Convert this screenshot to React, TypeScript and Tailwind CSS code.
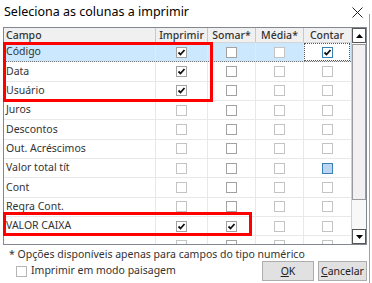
import React from "react";

type Row = {
  name: string;
  imprimir: boolean;
  somar: boolean;
  contar: boolean;
  contarBlue?: boolean;
};

const rows: Row[] = [
  { name: "Código", imprimir: true, somar: false, contar: true },
  { name: "Data", imprimir: true, somar: false, contar: false },
  { name: "Usuário", imprimir: true, somar: false, contar: false },
  { name: "Juros", imprimir: false, somar: false, contar: false },
  { name: "Descontos", imprimir: false, somar: false, contar: false },
  { name: "Out. Acréscimos", imprimir: false, somar: false, contar: false },
  { name: "Valor total tít", imprimir: false, somar: false, contar: false, contarBlue: true },
  { name: "Cont", imprimir: false, somar: false, contar: false },
  { name: "Regra Cont.", imprimir: false, somar: false, contar: false },
  { name: "VALOR CAIXA", imprimir: true, somar: true, contar: false },
  { name: "", imprimir: false, somar: false, contar: false },
];

function Check({
  checked,
  tone = "dark",
  fill = false,
  focus = false,
}: {
  checked: boolean;
  tone?: "dark" | "light";
  fill?: boolean;
  focus?: boolean;
}) {
  const border = fill || focus ? "border-[#3c7fb1]" : tone === "dark" ? "border-[#a2a2a2]" : "border-[#c4c4c4]";
  const bg = fill ? "bg-[#bcd6f2]" : "bg-white";
  return (
    <div className={`w-[11px] h-[11px] border ${border} ${bg} flex items-center justify-center`}>
      {checked && (
        <svg width="9" height="9" viewBox="0 0 9 9">
          <path d="M1.5 4.5 L3.5 6.5 L7.5 2" stroke="#111" strokeWidth="1.8" fill="none" />
        </svg>
      )}
    </div>
  );
}

export default function App() {
  return (
    <div
      className="relative w-[372px] h-[283px] bg-white overflow-hidden text-[#222]"
      style={{ fontFamily: '"Noto Sans", "Open Sans", sans-serif' }}
    >
      {/* title bar */}
      <div className="h-[25px] flex items-center justify-between pl-[4px] pr-[8px]">
        <span className="text-[12.5px] text-black">Seleciona as colunas a imprimir</span>
        <svg width="11" height="11" viewBox="0 0 11 11" className="mr-[1px]">
          <path d="M0.5 0.5 L10.5 10.5 M10.5 0.5 L0.5 10.5" stroke="#222" strokeWidth="1" />
        </svg>
      </div>

      {/* table */}
      <div className="ml-[3px] mt-[2px] w-[364px] h-[218px] border border-[#828790] flex overflow-hidden">
        <div className="flex-1 flex flex-col overflow-hidden text-[10.5px]">
          <div className="grid grid-cols-[152px_52px_48px_48px_46px] h-[15px] bg-[#f0f0f0] border-b border-[#d5d5d5] text-[#333] font-medium shrink-0">
            <div className="pl-[2px] border-r border-[#c8c8c8] leading-[14px]">Campo</div>
            <div className="text-center border-r border-[#c8c8c8] leading-[14px]">Imprimir</div>
            <div className="text-center border-r border-[#c8c8c8] leading-[14px]">Somar*</div>
            <div className="text-center border-r border-[#c8c8c8] leading-[14px]">Média*</div>
            <div className="text-center leading-[14px]">Contar</div>
          </div>
          {rows.map((r, i) => (
            <div
              key={i}
              className={`grid grid-cols-[152px_52px_48px_48px_46px] h-[19.33px] shrink-0 items-center ${
                i === 0 ? "bg-[#cce8ff] border-b border-dotted border-[#777]" : "border-b border-[#e8e8e8]"
              }`}
            >
              <div className="pl-[2px] border-r border-[#e8e8e8] h-full flex items-center text-[#333]">{r.name}</div>
              <div className="flex justify-center border-r border-[#e8e8e8] h-full items-center">
                <Check checked={r.imprimir} tone={r.imprimir ? "dark" : "light"} />
              </div>
              <div className="flex justify-center border-r border-[#e8e8e8] h-full items-center">
                <Check checked={r.somar} tone="dark" />
              </div>
              <div className="flex justify-center border-r border-[#e8e8e8] h-full items-center">
                <Check checked={false} tone="light" />
              </div>
              <div
                className={`flex justify-center h-full items-center ${
                  i === 0 ? "bg-white border border-dotted border-[#555]" : ""
                }`}
              >
                <Check checked={r.contar} tone="light" fill={r.contarBlue} focus={i === 0} />
              </div>
            </div>
          ))}
        </div>

        {/* scrollbar */}
        <div className="w-[15px] flex flex-col border-l border-[#d0d0d0] bg-[#f8f8f8]">
          <div className="h-[15px] border border-[#555] bg-white flex items-center justify-center">
            <svg width="7" height="4" viewBox="0 0 7 4">
              <path d="M0 4 L3.5 0 L7 4 Z" fill="#000" />
            </svg>
          </div>
          <div className="h-[156px] mt-[1px] bg-[#f3f0f4] border border-[#9a9a9a]" />
          <div
            className="flex-1"
            style={{ backgroundImage: "radial-gradient(#dcdcdc 0.6px, transparent 0.6px)", backgroundSize: "2px 2px" }}
          />
          <div className="h-[15px] border border-[#555] bg-white flex items-center justify-center">
            <svg width="7" height="4" viewBox="0 0 7 4">
              <path d="M0 0 L7 0 L3.5 4 Z" fill="#000" />
            </svg>
          </div>
        </div>
      </div>

      {/* footer */}
      <div className="pl-[9px] pt-[2px] text-[10.5px] text-[#333] leading-[14px]">
        * Opções disponíveis apenas para campos do tipo numérico
      </div>
      <div className="flex items-center justify-between pl-[16px] pr-[5px]">
        <label className="flex items-center gap-[4px] text-[10.5px] text-[#333]">
          <span className="w-[11px] h-[11px] border border-[#b5b5b5] bg-white" />
          Imprimir em modo paisagem
        </label>
        <div className="flex gap-[4px]">
          <button className="w-[52px] h-[20px] bg-[#e1e1e1] border border-[#adadad] text-[10.5px] text-[#222] leading-[18px]">
            <span className="underline">O</span>K
          </button>
          <button className="w-[49px] h-[20px] bg-[#e1e1e1] border border-[#adadad] text-[10.5px] text-[#222] leading-[18px]">
            <span className="underline">C</span>ancelar
          </button>
        </div>
      </div>

      {/* window right edge */}
      <div className="absolute right-[2px] top-[14px] bottom-0 w-px bg-[#a0a0a0]" />

      {/* red highlight boxes */}
      <div className="absolute left-[3px] top-[42px] w-[210px] h-[60px] border-[3px] border-[#ff0000]" />
      <div className="absolute left-[3px] top-[212px] w-[249px] h-[24px] border-[3px] border-[#ff0000]" />
    </div>
  );
}
